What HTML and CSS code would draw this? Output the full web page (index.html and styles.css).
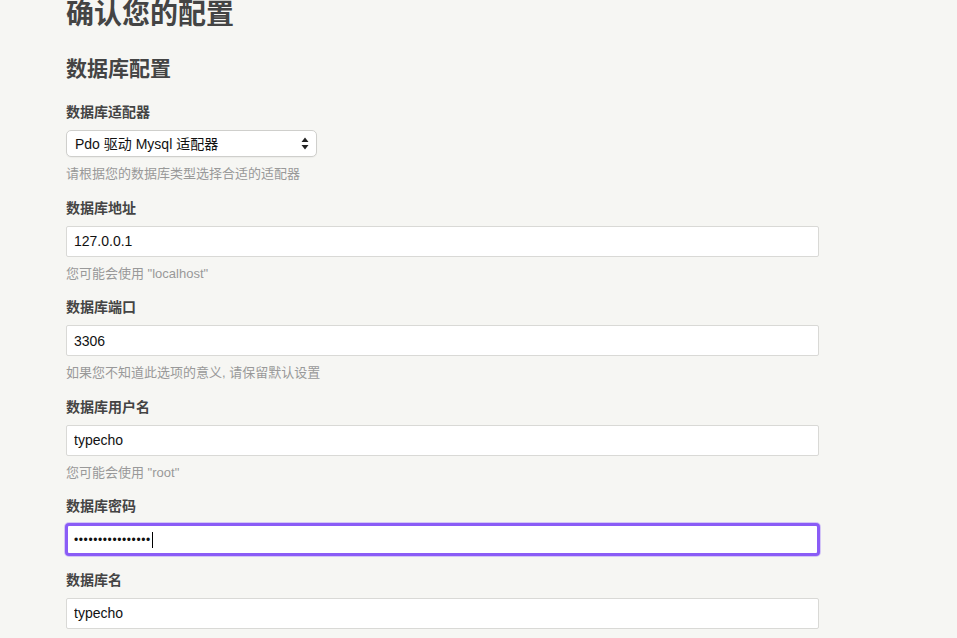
FILE: index.html
```html
<!DOCTYPE html>
<html lang="zh-CN">
<head>
<meta charset="utf-8">
<title>确认您的配置</title>
<link rel="stylesheet" href="styles.css">
</head>
<body>
<div class="page">
  <h1 class="title">确认您的配置</h1>
  <h2 class="subtitle">数据库配置</h2>
  <ul class="options">
    <li class="option">
      <label class="label" for="adapter">数据库适配器</label>
      <div class="select-wrap">
        <select id="adapter" class="select">
          <option>Pdo 驱动 Mysql 适配器</option>
        </select>
        <svg class="select-arrow" width="8" height="13" viewBox="0 0 8 13"><path d="M4 0.5 L7.5 5 L0.5 5 Z M4 12.5 L7.5 8 L0.5 8 Z" fill="#222"/></svg>
      </div>
      <p class="description">请根据您的数据库类型选择合适的适配器</p>
    </li>
    <li class="option">
      <label class="label" for="host">数据库地址</label>
      <input id="host" class="text" type="text" value="127.0.0.1">
      <p class="description">您可能会使用 "localhost"</p>
    </li>
    <li class="option">
      <label class="label" for="port">数据库端口</label>
      <input id="port" class="text" type="text" value="3306">
      <p class="description">如果您不知道此选项的意义, 请保留默认设置</p>
    </li>
    <li class="option">
      <label class="label" for="user">数据库用户名</label>
      <input id="user" class="text" type="text" value="typecho">
      <p class="description">您可能会使用 "root"</p>
    </li>
    <li class="option">
      <label class="label">数据库密码</label>
      <div class="text text-focus"><span class="dots">••••••••••••••••</span><span class="caret"></span></div>
    </li>
    <li class="option">
      <label class="label" for="dbname">数据库名</label>
      <input id="dbname" class="text" type="text" value="typecho">
    </li>
  </ul>
</div>
</body>
</html>
```

FILE: styles.css
```css
html, body {
  margin: 0;
  padding: 0;
  background: #f6f6f3;
}
body {
  font-family: "Liberation Sans", Arial, "Noto Sans CJK SC", sans-serif;
  color: #444;
  font-size: 14px;
  overflow: hidden;
}
.page {
  width: 753px;
  padding-left: 66px;
}
.title {
  margin: 1px 0 29px;
  font-size: 28px;
  line-height: 28px;
  font-weight: bold;
  color: #444;
}
.subtitle {
  margin: 0 0 23px;
  font-size: 21px;
  line-height: 21px;
  font-weight: bold;
  color: #444;
}
.options {
  list-style: none;
  margin: 0;
  padding: 0;
}
.option {
  margin: 0 0 14.5px;
}
.label {
  display: block;
  font-size: 14px;
  line-height: 20px;
  font-weight: bold;
  color: #444;
  margin-bottom: 8px;
}
.select-wrap {
  position: relative;
  width: 251px;
}
.select {
  display: block;
  width: 251px;
  height: 27px;
  margin: 0;
  padding: 0 20px 0 8px;
  border: 1px solid #cfcfcc;
  border-radius: 5px;
  background: #fff;
  -webkit-appearance: none;
  appearance: none;
  font-family: "Liberation Sans", Arial, "Noto Sans CJK SC", sans-serif;
  font-size: 14px;
  color: #111;
  box-shadow: 0 1px 1px rgba(0,0,0,0.04);
}
.select-arrow {
  position: absolute;
  right: 8px;
  top: 7px;
}
.description {
  margin: 7px 0 0;
  font-size: 13px;
  line-height: 19px;
  color: #999;
}
.text {
  display: block;
  box-sizing: border-box;
  width: 753px;
  height: 31px;
  margin: 0;
  padding: 0 7px;
  border: 1px solid #d9d9d6;
  border-radius: 2px;
  background: #fff;
  font-family: "Liberation Sans", Arial, "Noto Sans CJK SC", sans-serif;
  font-size: 14px;
  color: #111;
  outline: none;
}
.text-focus {
  display: flex;
  align-items: center;
  border: 2px solid #8a5cf6;
  border-radius: 3px;
  padding-left: 6px;
  box-shadow: 0 0 0 1px #8a5cf6, 0 0 0 2px rgba(170, 140, 250, 0.45);
}
.dots {
  font-size: 12px;
  letter-spacing: 0.6px;
  color: #111;
  line-height: 1;
}
.caret {
  display: inline-block;
  width: 1px;
  height: 16px;
  background: #000;
  margin-left: 1px;
}
```
